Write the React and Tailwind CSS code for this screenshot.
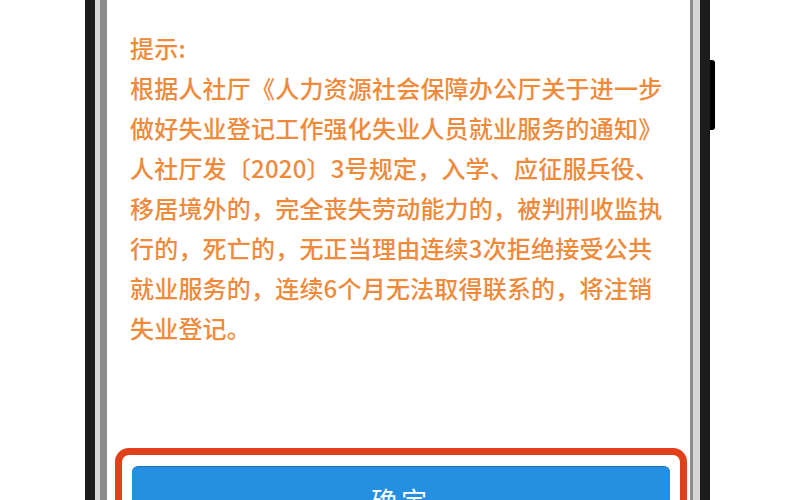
import React from 'react';

const lines = [
  '提示:',
  '根据人社厅《人力资源社会保障办公厅关于进一步',
  '做好失业登记工作强化失业人员就业服务的通知》',
  '人社厅发〔2020〕3号规定，入学、应征服兵役、',
  '移居境外的，完全丧失劳动能力的，被判刑收监执',
  '行的，死亡的，无正当理由连续3次拒绝接受公共',
  '就业服务的，连续6个月无法取得联系的，将注销',
  '失业登记。',
];

export default function App() {
  return (
    <div
      className="w-[800px] h-[500px] overflow-hidden bg-white flex items-start"
      style={{ fontFamily: '"Noto Sans CJK SC", "Noto Sans", sans-serif' }}
    >
      {/* phone body */}
      <div className="ml-[85px] h-[500px] flex">
        <div className="w-[10px] bg-[#1c1c1c]" />
        <div className="w-[5px] bg-[#d6d6d6]" />
        <div className="w-[7px] bg-[#8c8c8c]" />

        {/* screen */}
        <div className="w-[583px] bg-white flex flex-col">
          <div className="pt-[28px] pl-[23px] text-[24px] leading-[40px] font-medium text-[#ef8a3b] tracking-[0.2px]">
            {lines.map((l, i) => (
              <div key={i} className="whitespace-nowrap">{l}</div>
            ))}
          </div>

          <div className="mt-[100px] ml-[8px] mr-[3px] h-[80px] border-[7px] border-[#e2401a] rounded-[14px] pt-[11px] px-[10px]">
            <div className="h-[80px] bg-[#2590e2] rounded-[6px] border-t border-[#1c6fb8] flex justify-center pt-[18px]">
              <span className="text-white text-[26px] leading-[30px] tracking-[4px]">确定</span>
            </div>
          </div>
        </div>

        <div className="w-[3px] bg-[#8c8c8c]" />
        <div className="w-[7px] bg-[#d6d6d6]" />
        <div className="w-[10px] bg-[#1c1c1c]" />
      </div>

      {/* side button */}
      <div className="mt-[60px] w-[5px] h-[70px] bg-black rounded-r-[3px]" />
    </div>
  );
}
